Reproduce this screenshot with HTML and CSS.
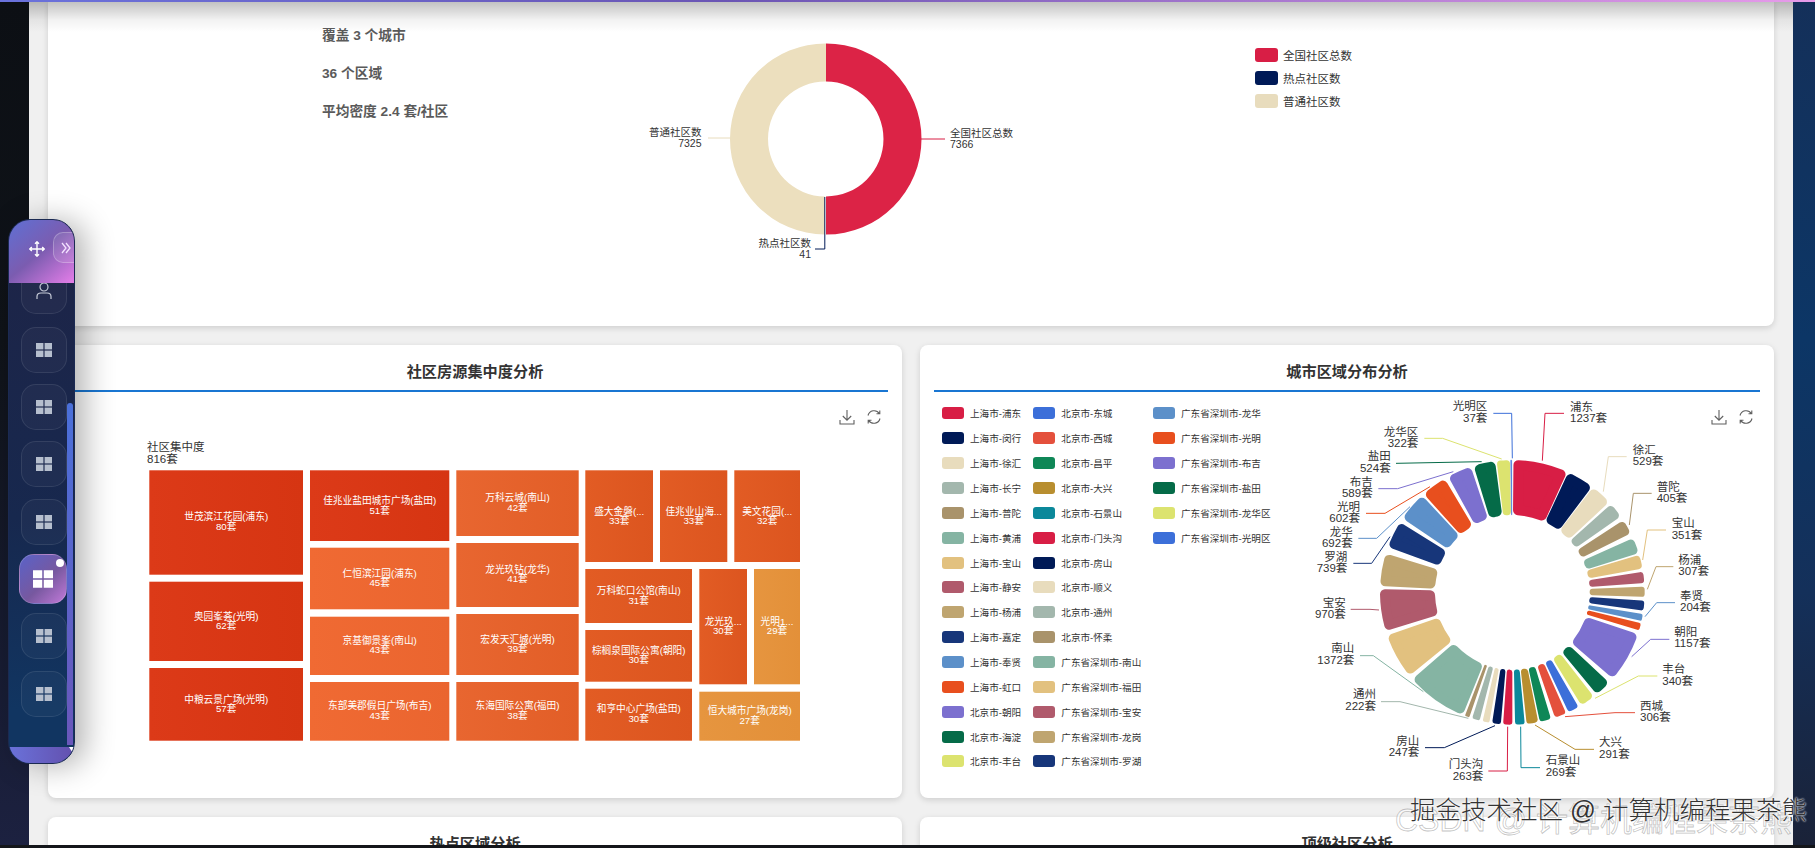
FILE: index.html
```html
<!doctype html>
<html lang="en">
<head>
    <meta charset="UTF-8">
    <title>社区数据分析</title>
    <link rel="stylesheet" href="styles.css">
</head>
<body>
<svg class="sprites" width="0" height="0">
    <symbol id="gridIcon" viewBox="0 0 16 14">
        <rect x="0" y="0" width="7.4" height="6.4"/>
        <rect x="8.6" y="0" width="7.4" height="6.4"/>
        <rect x="0" y="7.6" width="7.4" height="6.4"/>
        <rect x="8.6" y="7.6" width="7.4" height="6.4"/>
    </symbol>
    <symbol id="saveIcon" viewBox="0 0 16 16">
        <path d="M8 1v10M3.8 7 8 11.2 12.2 7M1 11v4h14v-4"/>
    </symbol>
    <symbol id="refreshIcon" viewBox="0 0 16 16">
        <path d="M2 6.5A6.3 6.3 0 0 1 13.4 4.6M14 9.500A6.300 6.300 0 0 1 2.600 11.400M13.800 1.500v3.300h-3.300M2.200 14.500v-3.300h3.300"/>
    </symbol>
</svg>

<div class="top-bar"></div>
<div class="main">
    <div class="strip-left"></div>
    <div class="content">
        <div class="top-shade"></div>

        <div class="card card-summary">
            <div class="stats">
                <p>覆盖 3 个城市</p>
                <p>36 个区域</p>
                <p>平均密度 2.4 套/社区</p>
            </div>
            <svg class="total-pie" width="400" height="240" viewBox="640 30 400 240">
                <path fill="#dc2346" d="M826 43.500A95.500 95.500 0 0 1 826 234.500V196.500A57.500 57.500 0 0 0 826 81.500Z"/>
                <path fill="#ecdfbe" d="M826 43.500A95.500 95.500 0 0 0 825 234.500V196.500A57.500 57.500 0 0 1 826 81.500Z"/>
                <path class="leader c1" d="M824.800 197V249H815"/>
                <path class="leader c0" d="M921 139H945"/>
                <path class="leader c2" d="M730 138H708"/>
                <text class="total-label" x="950" y="137">全国社区总数<tspan x="950" dy="10.500">7366</tspan></text>
                <text class="total-label end" x="701.500" y="136">普通社区数<tspan x="701.500" dy="10.500">7325</tspan></text>
                <text class="total-label end" x="811" y="247">热点社区数<tspan x="811" dy="10.500">41</tspan></text>
            </svg>
            <ul class="total-legend">
                <li><i class="c0"></i>全国社区总数</li>
                <li><i class="c1"></i>热点社区数</li>
                <li><i class="c2"></i>普通社区数</li>
            </ul>
        </div>

        <div class="card">
            <h2>社区房源集中度分析</h2>
            <div class="chart chart-treemap">
                <div class="toolbox">
                    <svg><use href="#saveIcon"/></svg>
                    <svg><use href="#refreshIcon"/></svg>
                </div>
                <svg class="treemap" width="680" height="330" viewBox="130 430 680 330">
                    <defs>
                        <linearGradient id="tmRed"><stop offset="0" stop-color="#dc3a18"/><stop offset="1" stop-color="#d63512"/></linearGradient>
                        <linearGradient id="tmBright"><stop offset="0" stop-color="#f06a33"/><stop offset="1" stop-color="#ea652f"/></linearGradient>
                        <linearGradient id="tmMid"><stop offset="0" stop-color="#e86630"/><stop offset="1" stop-color="#e25e27"/></linearGradient>
                        <linearGradient id="tmDeep"><stop offset="0" stop-color="#e25c24"/><stop offset="1" stop-color="#dc551f"/></linearGradient>
                        <linearGradient id="tmLight"><stop offset="0" stop-color="#e6953f"/><stop offset="1" stop-color="#e39039"/></linearGradient>
                    </defs>
                    <text class="tm-root" x="147" y="451">社区集中度<tspan x="147" dy="11.500">816套</tspan></text>

                    <rect fill="url(#tmRed)" x="149.300" y="470.300" width="153.700" height="104.400"/>
                    <rect fill="url(#tmRed)" x="149.300" y="581.700" width="153.700" height="79.300"/>
                    <rect fill="url(#tmRed)" x="149.300" y="668" width="153.700" height="72.700"/>
                    <text x="226.200" y="520.400">世茂滨江花园(浦东)<tspan x="226.200" dy="9.300">80套</tspan></text>
                    <text x="226.200" y="619.700">奥园峯荟(光明)<tspan x="226.200" dy="9.300">62套</tspan></text>
                    <text x="226.200" y="702.700">中粮云景广场(光明)<tspan x="226.200" dy="9.300">57套</tspan></text>

                    <rect fill="url(#tmRed)" x="310" y="470.300" width="139.300" height="70.700"/>
                    <rect fill="url(#tmBright)" x="310" y="547.700" width="139.300" height="61.600"/>
                    <rect fill="url(#tmBright)" x="310" y="616.700" width="139.300" height="58.300"/>
                    <rect fill="url(#tmBright)" x="310" y="682" width="139.300" height="58.700"/>
                    <text x="379.700" y="503.700">佳兆业盐田城市广场(盐田)<tspan x="379.700" dy="10">51套</tspan></text>
                    <text x="379.700" y="576.700">仁恒滨江园(浦东)<tspan x="379.700" dy="9.700">45套</tspan></text>
                    <text x="379.700" y="643.700">京基御景峯(南山)<tspan x="379.700" dy="9.300">43套</tspan></text>
                    <text x="379.700" y="709.400">东部美郡假日广场(布吉)<tspan x="379.700" dy="9.600">43套</tspan></text>

                    <rect fill="url(#tmMid)" x="456.300" y="470.300" width="122.400" height="65.700"/>
                    <rect fill="url(#tmMid)" x="456.300" y="543" width="122.400" height="64"/>
                    <rect fill="url(#tmMid)" x="456.300" y="614" width="122.400" height="61"/>
                    <rect fill="url(#tmMid)" x="456.300" y="682" width="122.400" height="58.700"/>
                    <text x="517.500" y="501.400">万科云城(南山)<tspan x="517.500" dy="9.300">42套</tspan></text>
                    <text x="517.500" y="572.700">龙光玖钻(龙华)<tspan x="517.500" dy="9.300">41套</tspan></text>
                    <text x="517.500" y="642.700">宏发天汇城(光明)<tspan x="517.500" dy="9.300">39套</tspan></text>
                    <text x="517.500" y="709.400">东海国际公寓(福田)<tspan x="517.500" dy="9.600">38套</tspan></text>

                    <rect fill="url(#tmDeep)" x="585.300" y="470.300" width="67.700" height="91.700"/>
                    <rect fill="url(#tmDeep)" x="660" y="470.300" width="67.300" height="91.700"/>
                    <rect fill="url(#tmDeep)" x="734.300" y="470.300" width="65.700" height="91.700"/>
                    <text x="619.200" y="514.700">盛大金磐(...<tspan x="619.200" dy="9.300">33套</tspan></text>
                    <text x="693.700" y="514.700">佳兆业山海...<tspan x="693.700" dy="9.300">33套</tspan></text>
                    <text x="767.200" y="514.700">美文花园(...<tspan x="767.200" dy="9.300">32套</tspan></text>

                    <rect fill="url(#tmDeep)" x="585.300" y="569" width="106.700" height="54"/>
                    <rect fill="url(#tmDeep)" x="585.300" y="630" width="106.700" height="51.700"/>
                    <rect fill="url(#tmDeep)" x="585.300" y="688.700" width="106.700" height="52"/>
                    <text x="638.700" y="594">万科蛇口公馆(南山)<tspan x="638.700" dy="9.700">31套</tspan></text>
                    <text x="638.700" y="653.700">棕榈泉国际公寓(朝阳)<tspan x="638.700" dy="9.700">30套</tspan></text>
                    <text x="638.700" y="712.400">和亨中心广场(盐田)<tspan x="638.700" dy="9.600">30套</tspan></text>

                    <rect fill="url(#tmDeep)" x="699.300" y="569" width="47.700" height="115.300"/>
                    <rect fill="url(#tmLight)" x="754" y="569" width="46" height="115.300"/>
                    <rect fill="url(#tmLight)" x="699.300" y="691.700" width="100.700" height="49"/>
                    <text x="723.200" y="624.700">龙光玖...<tspan x="723.200" dy="9.300">30套</tspan></text>
                    <text x="777" y="624.700">光明1...<tspan x="777" dy="9.300">29套</tspan></text>
                    <text x="749.700" y="714.400">恒大城市广场(龙岗)<tspan x="749.700" dy="9.600">27套</tspan></text>
                </svg>
            </div>
        </div>

        <div class="card">
            <h2>城市区域分布分析</h2>
            <div class="chart chart-city">
                <div class="toolbox">
                    <svg><use href="#saveIcon"/></svg>
                    <svg><use href="#refreshIcon"/></svg>
                </div>
                <ul class="city-legend">
                    <li><i class="c0"></i>上海市-浦东</li>
                    <li><i class="c1"></i>上海市-闵行</li>
                    <li><i class="c2"></i>上海市-徐汇</li>
                    <li><i class="c3"></i>上海市-长宁</li>
                    <li><i class="c4"></i>上海市-普陀</li>
                    <li><i class="c5"></i>上海市-黄浦</li>
                    <li><i class="c6"></i>上海市-宝山</li>
                    <li><i class="c7"></i>上海市-静安</li>
                    <li><i class="c8"></i>上海市-杨浦</li>
                    <li><i class="c9"></i>上海市-嘉定</li>
                    <li><i class="c10"></i>上海市-奉贤</li>
                    <li><i class="c11"></i>上海市-虹口</li>
                    <li><i class="c12"></i>北京市-朝阳</li>
                    <li><i class="c13"></i>北京市-海淀</li>
                    <li><i class="c14"></i>北京市-丰台</li>
                    <li><i class="c15"></i>北京市-东城</li>
                    <li><i class="c16"></i>北京市-西城</li>
                    <li><i class="c17"></i>北京市-昌平</li>
                    <li><i class="c18"></i>北京市-大兴</li>
                    <li><i class="c19"></i>北京市-石景山</li>
                    <li><i class="c0"></i>北京市-门头沟</li>
                    <li><i class="c1"></i>北京市-房山</li>
                    <li><i class="c2"></i>北京市-顺义</li>
                    <li><i class="c3"></i>北京市-通州</li>
                    <li><i class="c4"></i>北京市-怀柔</li>
                    <li><i class="c5"></i>广东省深圳市-南山</li>
                    <li><i class="c6"></i>广东省深圳市-福田</li>
                    <li><i class="c7"></i>广东省深圳市-宝安</li>
                    <li><i class="c8"></i>广东省深圳市-龙岗</li>
                    <li><i class="c9"></i>广东省深圳市-罗湖</li>
                    <li><i class="c10"></i>广东省深圳市-龙华</li>
                    <li><i class="c11"></i>广东省深圳市-光明</li>
                    <li><i class="c12"></i>广东省深圳市-布吉</li>
                    <li><i class="c13"></i>广东省深圳市-盐田</li>
                    <li><i class="c14"></i>广东省深圳市-龙华区</li>
                    <li><i class="c15"></i>广东省深圳市-光明区</li>
                </ul>
                <svg class="city-pie" width="460" height="398" viewBox="0 6 1380 1194">
                    <g id="citySlices"></g>
                    <path class="leader c0" d="M697 212 705 70H762"/>
                    <path class="leader c2" d="M880 305 895 200H950"/>
                    <path class="leader c4" d="M958 405 970 310H1025"/>
                    <path class="leader c6" d="M998 510 1012 420H1068"/>
                    <path class="leader c8" d="M1012 598 1038 530H1090"/>
                    <path class="leader c10" d="M1005 680 1040 638H1095"/>
                    <path class="leader c12" d="M965 800 1022 748H1078"/>
                    <path class="leader c14" d="M855 925 985 858H1042"/>
                    <path class="leader c16" d="M765 980 915 968H975"/>
                    <path class="leader c18" d="M675 1005 795 1078H852"/>
                    <path class="leader c19" d="M632 1010 633 1133H690"/>
                    <path class="leader c0" d="M593 1010 592 1143H535"/>
                    <path class="leader c1" d="M555 1007 403 1073H345"/>
                    <path class="leader c3" d="M475 985 270 935H213"/>
                    <path class="leader c5" d="M340 905 190 797H150"/>
                    <path class="leader c7" d="M207 660 180 658H122"/>
                    <path class="leader c9" d="M240 440 185 520H130"/>
                    <path class="leader c10" d="M300 350 200 445H145"/>
                    <path class="leader c11" d="M360 290 225 370H168"/>
                    <path class="leader c12" d="M430 245 263 296H205"/>
                    <path class="leader c13" d="M515 215 258 220"/>
                    <path class="leader c14" d="M575 207 398 145H343"/>
                    <path class="leader c15" d="M607 205 605 70H550"/>

                    <text x="780" y="62">浦东<tspan x="780" dy="35">1237套</tspan></text>
                    <text x="968" y="192">徐汇<tspan x="968" dy="34">529套</tspan></text>
                    <text x="1040" y="302">普陀<tspan x="1040" dy="35">405套</tspan></text>
                    <text x="1085" y="412">宝山<tspan x="1085" dy="34">351套</tspan></text>
                    <text x="1105" y="522">杨浦<tspan x="1105" dy="34">307套</tspan></text>
                    <text x="1110" y="629">奉贤<tspan x="1110" dy="35">204套</tspan></text>
                    <text x="1093" y="737">朝阳<tspan x="1093" dy="35">1157套</tspan></text>
                    <text x="1057" y="850">丰台<tspan x="1057" dy="35">340套</tspan></text>
                    <text x="990" y="959">西城<tspan x="990" dy="35">306套</tspan></text>
                    <text x="867" y="1069">大兴<tspan x="867" dy="34">291套</tspan></text>
                    <text x="707" y="1122">石景山<tspan x="707" dy="35">269套</tspan></text>

                    <text class="end" x="520" y="1134">门头沟<tspan x="520" dy="35">263套</tspan></text>
                    <text class="end" x="328" y="1064">房山<tspan x="328" dy="35">247套</tspan></text>
                    <text class="end" x="198" y="925">通州<tspan x="198" dy="34">222套</tspan></text>
                    <text class="end" x="133" y="787">南山<tspan x="133" dy="35">1372套</tspan></text>
                    <text class="end" x="107" y="650">宝安<tspan x="107" dy="34">970套</tspan></text>
                    <text class="end" x="112" y="512">罗湖<tspan x="112" dy="35">739套</tspan></text>
                    <text class="end" x="128" y="437">龙华<tspan x="128" dy="35">692套</tspan></text>
                    <text class="end" x="150" y="362">光明<tspan x="150" dy="35">602套</tspan></text>
                    <text class="end" x="188" y="287">布吉<tspan x="188" dy="33">589套</tspan></text>
                    <text class="end" x="242" y="210">盐田<tspan x="242" dy="35">524套</tspan></text>
                    <text class="end" x="325" y="137">龙华区<tspan x="325" dy="33">322套</tspan></text>
                    <text class="end" x="532" y="60">光明区<tspan x="532" dy="35">37套</tspan></text>
                </svg>
            </div>
        </div>

        <div class="card">
            <h2>热点区域分析</h2>
        </div>
        <div class="card">
            <h2>顶级社区分析</h2>
        </div>
    </div>
    <div class="strip-right"></div>
</div>
<div class="bottom-bar"></div>

<div class="dock">
    <div class="dock-head">
        <svg class="move-icon" width="16" height="16" viewBox="0 0 16 16">
            <path d="M8 1v14M1 8h14M6 2.800 8 .8l2 2M6 13.200l2 2 2-2M2.800 6l-2 2 2 2M13.200 6l2 2-2 2"/>
        </svg>
        <div class="dock-toggle">
            <svg width="10" height="12" viewBox="0 0 10 12"><path d="M1 1l4 5-4 5M5 1l4 5-4 5"/></svg>
        </div>
    </div>
    <div class="dock-list">
        <div class="dock-btn dock-user">
            <svg class="user-icon" width="16" height="18" viewBox="0 0 16 18"><circle cx="8" cy="5" r="4"/><path d="M1 17v-2.500Q1 11 5 11h6q4 0 4 3.500V17"/></svg>
        </div>
        <div class="dock-btn"><svg class="grid-icon"><use href="#gridIcon"/></svg></div>
        <div class="dock-btn"><svg class="grid-icon"><use href="#gridIcon"/></svg></div>
        <div class="dock-btn"><svg class="grid-icon"><use href="#gridIcon"/></svg></div>
        <div class="dock-btn"><svg class="grid-icon"><use href="#gridIcon"/></svg></div>
        <div class="dock-btn active"><svg class="grid-icon"><use href="#gridIcon"/></svg></div>
        <div class="dock-btn"><svg class="grid-icon"><use href="#gridIcon"/></svg></div>
        <div class="dock-btn"><svg class="grid-icon"><use href="#gridIcon"/></svg></div>
    </div>
    <div class="dock-scroll"></div>
    <div class="dock-foot"></div>
</div>

<div class="mark-ghost">CSDN @ 计算机编程果茶熊</div>
<div class="mark">掘金技术社区 @ 计算机编程果茶熊</div>

<script src="script.js"></script>
</body>
</html>
```

FILE: styles.css
```css
* {
    padding: 0;
    margin: 0;
    box-sizing: border-box;
}

body {
    width: 1815px;
    height: 848px;
    overflow: hidden;
    display: flex;
    flex-direction: column;
    font-family: "Liberation Sans", "Noto Sans CJK SC", sans-serif;
    color: #333;
    background: #f0f0f0;
}

ul {
    list-style: none;
}

.sprites {
    position: absolute;
}

.top-bar {
    height: 2px;
    flex: none;
    background: linear-gradient(90deg, #6a72dc, #6a55b4 40%, #e79bea);
}

.bottom-bar {
    height: 3px;
    flex: none;
    background: #14161a;
}

.main {
    flex: 1;
    min-height: 0;
    display: flex;
}

.strip-left {
    width: 29px;
    flex: none;
    background: linear-gradient(#0c0f14, #0f1319 40%, #1c2140);
}

.strip-right {
    width: 22px;
    flex: none;
    background: linear-gradient(#14305a, #0c3666 40%, #14305a 70%, #1a2238);
}

.content {
    position: relative;
    flex: 1;
    min-width: 0;
    overflow: hidden;
    display: grid;
    grid-template-columns: 854px 854px;
    grid-template-rows: 324px 453px auto;
    gap: 19px 18px;
    padding: 0 19px;
}

.top-shade {
    position: absolute;
    top: 0;
    left: 0;
    right: 0;
    height: 30px;
    z-index: 1;
    background: linear-gradient(rgba(0, 0, 0, 0.24), rgba(0, 0, 0, 0.05) 60%, rgba(0, 0, 0, 0));
}

.card {
    background: #fff;
    border-radius: 8px;
    box-shadow: 0 2px 6px rgba(0, 0, 0, 0.14);
}

.card h2 {
    margin: 0 14px;
    padding: 15px 0 6px;
    font-size: 15.2px;
    line-height: 24px;
    font-weight: bold;
    text-align: center;
    border-bottom: 2px solid #1976d2;
}

.card-summary {
    grid-column: 1 / -1;
    display: flex;
    align-items: flex-start;
    border-radius: 0 0 8px 8px;
}

.stats {
    width: 318px;
    margin-left: 274px;
    padding-top: 15px;
    font-size: 13.7px;
    line-height: 38px;
    font-weight: bold;
    color: #5a5a5a;
}

.total-pie {
    flex: none;
    margin-top: 28px;
}

.total-label {
    font-size: 10.5px;
    fill: #333;
}

.end {
    text-anchor: end;
}

.total-legend {
    margin: 41px 0 0 215px;
    font-size: 11.5px;
}

.total-legend li {
    display: flex;
    align-items: center;
    gap: 5px;
    height: 23px;
}

.total-legend i {
    width: 23px;
    height: 14px;
    border-radius: 3px;
}

.chart {
    position: relative;
}

.toolbox {
    position: absolute;
    top: 17px;
    right: 20px;
    display: flex;
    gap: 11px;
}

.toolbox svg {
    width: 16px;
    height: 16px;
    fill: none;
    stroke: #5f5f5f;
    stroke-width: 1.1;
}

.chart-treemap {
    padding: 38px 0 0 82px;
}

.treemap {
    display: block;
}

.treemap text {
    font-size: 9.7px;
    fill: #fff;
    text-anchor: middle;
}

.treemap .tm-root {
    font-size: 11.500px;
    fill: #333;
    text-anchor: start;
}

.chart-city {
    display: flex;
    align-items: flex-start;
}

.city-legend {
    flex: none;
    display: grid;
    grid-auto-flow: column;
    grid-template-rows: repeat(15, 24.86px);
    grid-template-columns: 91.3px 119.7px 157.3px;
    padding: 9px 0 0 22px;
    box-sizing: content-box;
    font-size: 9.6px;
}

.city-legend li {
    display: flex;
    align-items: center;
    gap: 6px;
    white-space: nowrap;
}

.city-legend i {
    width: 22px;
    height: 12px;
    border-radius: 3px;
    flex: none;
}

.city-pie {
    flex: none;
}

.city-pie text {
    font-size: 34.5px;
    fill: #333;
}

.city-pie .end {
    text-anchor: end;
}

.c0 { background: #d81e45; fill: #d81e45; stroke: #d81e45; }
.c1 { background: #001a57; fill: #001a57; stroke: #001a57; }
.c2 { background: #e8dcbd; fill: #e8dcbd; stroke: #e8dcbd; }
.c3 { background: #a3b7ad; fill: #a3b7ad; stroke: #a3b7ad; }
.c4 { background: #a9936b; fill: #a9936b; stroke: #a9936b; }
.c5 { background: #85b4a3; fill: #85b4a3; stroke: #85b4a3; }
.c6 { background: #e2c17f; fill: #e2c17f; stroke: #e2c17f; }
.c7 { background: #b05a6c; fill: #b05a6c; stroke: #b05a6c; }
.c8 { background: #bfa570; fill: #bfa570; stroke: #bfa570; }
.c9 { background: #17367a; fill: #17367a; stroke: #17367a; }
.c10 { background: #5c90c9; fill: #5c90c9; stroke: #5c90c9; }
.c11 { background: #e84f1e; fill: #e84f1e; stroke: #e84f1e; }
.c12 { background: #7c70cf; fill: #7c70cf; stroke: #7c70cf; }
.c13 { background: #056b48; fill: #056b48; stroke: #056b48; }
.c14 { background: #dce36f; fill: #dce36f; stroke: #dce36f; }
.c15 { background: #3c6fd9; fill: #3c6fd9; stroke: #3c6fd9; }
.c16 { background: #e4503c; fill: #e4503c; stroke: #e4503c; }
.c17 { background: #0f8757; fill: #0f8757; stroke: #0f8757; }
.c18 { background: #b88e2f; fill: #b88e2f; stroke: #b88e2f; }
.c19 { background: #0b889a; fill: #0b889a; stroke: #0b889a; }

.leader {
    fill: none;
    stroke-width: 3;
}

.total-pie .leader {
    stroke-width: 1;
}

.city-slice {
    stroke-linejoin: round;
}

/* 左侧悬浮菜单 */
.dock {
    position: absolute;
    top: 219px;
    left: 8px;
    width: 67px;
    height: 545px;
    overflow: hidden;
    display: flex;
    flex-direction: column;
    border: 1px solid #1b2a52;
    border-radius: 22px;
    background: linear-gradient(#1e2447, #17284e 55%, #113561 90%);
    box-shadow: 10px 2px 30px rgba(0, 0, 0, 0.3);
    z-index: 2;
}

.dock-head {
    position: relative;
    z-index: 1;
    flex: none;
    height: 63px;
    display: flex;
    align-items: center;
    padding-left: 20px;
    background: linear-gradient(140deg, #5f70d4, #7b5cb0 50%, #e57ee9);
}

.move-icon {
    flex: none;
    margin-top: -5px;
    fill: none;
    stroke: #fff;
    stroke-width: 1.4;
}

.dock-toggle {
    flex: none;
    display: flex;
    align-items: center;
    justify-content: center;
    width: 34px;
    height: 31px;
    margin: -8px 0 0 8px;
    padding-right: 8px;
    border: 1px solid rgba(255, 255, 255, 0.25);
    border-radius: 10px;
    background: rgba(255, 255, 255, 0.1);
}

.dock-toggle svg {
    fill: none;
    stroke: #f3e2ff;
    stroke-width: 1.3;
}

.dock-list {
    flex: 1;
    min-height: 0;
    display: flex;
    flex-direction: column;
    gap: 11.3px;
    margin-top: -15px;
    padding-left: 12px;
}

.dock-btn {
    flex: none;
    width: 46px;
    height: 46px;
    display: flex;
    align-items: center;
    justify-content: center;
    border: 1px solid rgba(255, 255, 255, 0.09);
    border-radius: 15px;
    background: rgba(255, 255, 255, 0.03);
}

.dock-user {
    margin-bottom: 1.5px;
}

.grid-icon {
    width: 16px;
    height: 14px;
    fill: #b6bfce;
}

.user-icon {
    fill: none;
    stroke: #c6cbd8;
    stroke-width: 1.200;
}

.dock-btn.active {
    position: relative;
    width: 48px;
    height: 50px;
    margin: -2px 0 -2px -2px;
    border: 1px solid rgba(255, 255, 255, 0.18);
    background: linear-gradient(135deg, #5a62c8, #77589f 55%, #c17ad9);
}

.dock-btn.active .grid-icon {
    width: 20px;
    height: 18px;
    fill: #fff;
}

.dock-btn.active::after {
    content: "";
    position: absolute;
    top: 4px;
    right: 2px;
    width: 8px;
    height: 8px;
    border-radius: 50%;
    background: #fff;
}

.dock-scroll {
    position: absolute;
    top: 183px;
    right: 1px;
    width: 6px;
    height: 342px;
    border-radius: 3px 3px 0 0;
    background: linear-gradient(#4a70da, #6a57bb);
}

.dock-foot {
    position: relative;
    flex: none;
    height: 16px;
    background: linear-gradient(90deg, #6a72da, #6350ae);
}

.dock-foot::after {
    content: "";
    position: absolute;
    top: 0;
    right: 0;
    border-top: 8px solid #fff;
    border-left: 5px solid transparent;
}

/* 水印 */
.mark,
.mark-ghost {
    position: absolute;
    white-space: nowrap;
    line-height: 28px;
    z-index: 3;
}

.mark {
    top: 796px;
    left: 1410px;
    font-size: 25.5px;
    color: #333;
    font-weight: 300;
    text-shadow: 0 0 2px #fff, 0 0 2px #fff;
}

.mark-ghost {
    top: 806px;
    left: 1395px;
    font-size: 32px;
    color: rgba(255, 255, 255, 0.6);
    -webkit-text-stroke: 0.8px rgba(120, 120, 120, 0.45);
}
```

FILE: script.js
```js
// 城市区域环形图：每一块的起止角度（度，顺时针，从正上方开始）
const cityAngles = [
    [0.5, 24.5], [25, 37], [37.5, 47], [48.2, 55], [57, 63.5], [65.8, 72.8],
    [73.6, 79.6], [81, 86], [87.5, 92], [93.6, 98], [99.5, 102.5], [103.5, 106.7],
    [108.4, 130.6], [133, 140.4], [142, 148.6], [150, 154.9], [156, 161.2], [163, 168],
    [168.7, 173.8], [174.6, 178.8], [180, 184], [185, 188.8], [190, 193], [194.3, 197.7],
    [199, 201], [202, 229], [231, 251], [253, 271.4], [272.7, 287], [290, 302],
    [304, 317], [318, 329.2], [331, 341.7], [343, 352.5], [353.2, 359], [359.2, 359.8]
];

const CX = 607, CY = 607, OUTER = 397, INNER = 232, CORNER = 15;

function point(radius, deg) {
    let rad = deg * Math.PI / 180;
    return (CX + radius * Math.sin(rad)).toFixed(1) + " " + (CY - radius * Math.cos(rad)).toFixed(1);
}

//圆角用描边的 round 连接来做，路径往里缩一个 corner
function slicePath(from, to, corner) {
    let ro = OUTER - corner;
    let ri = INNER + corner;
    let dOuter = corner / ro * 180 / Math.PI;
    let dInner = corner / ri * 180 / Math.PI;
    return "M" + point(ro, from + dOuter)
        + "A" + ro + " " + ro + " 0 0 1 " + point(ro, to - dOuter)
        + "L" + point(ri, to - dInner)
        + "A" + ri + " " + ri + " 0 0 0 " + point(ri, from + dInner) + "Z";
}

let group = document.getElementById("citySlices");
cityAngles.forEach(function (item, i) {
    let width = (item[1] - item[0]) * Math.PI / 180 * INNER;
    let corner = Math.max(0.5, Math.min(CORNER, width / 2 - 0.5));
    let path = document.createElementNS("http://www.w3.org/2000/svg", "path");
    path.setAttribute("class", "city-slice c" + (i % 20));
    path.setAttribute("stroke-width", corner * 2);
    path.setAttribute("d", slicePath(item[0], item[1], corner));
    group.appendChild(path);
});
```
